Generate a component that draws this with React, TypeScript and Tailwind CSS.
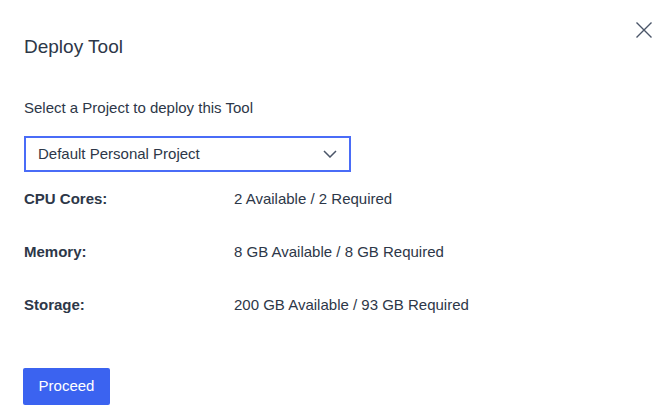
import React from 'react';

const resources = [
  { label: 'CPU Cores:', value: '2 Available / 2 Required' },
  { label: 'Memory:', value: '8 GB Available / 8 GB Required' },
  { label: 'Storage:', value: '200 GB Available / 93 GB Required' },
];

const App: React.FC = () => {
  return (
    <div className="relative w-[667px] h-[418px] bg-white text-[#2d3748] font-['Liberation_Sans',Arial,sans-serif]">
      <button className="absolute right-[13px] top-[20px] text-[#4a5568]" aria-label="Close">
        <svg width="20" height="20" viewBox="0 0 20 20" fill="none" stroke="currentColor" strokeWidth="1.4">
          <path d="M2.5 2.5L17.5 17.5M17.5 2.5L2.5 17.5" />
        </svg>
      </button>
      <div className="px-6 pt-[35px]">
        <h2 className="text-[19px] leading-[24px]">Deploy Tool</h2>
        <p className="mt-[39px] text-[15px] leading-[20px]">Select a Project to deploy this Tool</p>
        <div className="mt-[18px] w-[327px] h-[36px] border-2 border-[#4a6cf7] flex items-center justify-between pl-[12px] pr-[12px]">
          <span className="text-[15px]">Default Personal Project</span>
          <svg width="14" height="8" viewBox="0 0 14 8" fill="none" stroke="#4a5568" strokeWidth="1.5">
            <path d="M1 1l6 6 6-6" />
          </svg>
        </div>
        <div className="mt-[17px] flex flex-col gap-[33px]">
          {resources.map((r) => (
            <div key={r.label} className="flex text-[15px] leading-[20px]">
              <span className="w-[210px] font-bold">{r.label}</span>
              <span>{r.value}</span>
            </div>
          ))}
        </div>
        <button className="mt-[53px] -ml-px w-[87px] h-[37px] rounded-[2px] bg-[#3b63f0] text-white text-[15px] font-medium">
          Proceed
        </button>
      </div>
    </div>
  );
};

export default App;
